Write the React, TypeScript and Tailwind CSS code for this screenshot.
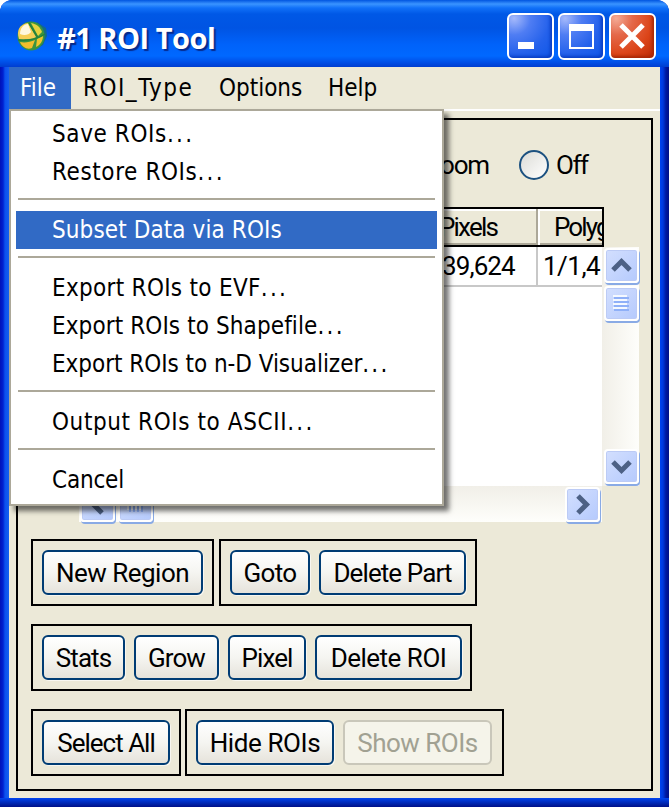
import { clsx } from 'clsx'

const menuFont = "font-['DejaVu_Sans_Condensed','DejaVu_Sans',sans-serif] [font-stretch:condensed]"
const uiFont = "font-['Roboto',sans-serif] [font-stretch:normal]"

const menuItems = [
  { label: 'Save ROIs', tracking: 'tracking-[0.6px]', dots: true },
  { label: 'Restore ROIs', tracking: 'tracking-[0.6px]', dots: true },
  null,
  { label: 'Subset Data via ROIs', tracking: 'tracking-[0.1px]', active: true },
  null,
  { label: 'Export ROIs to EVF', tracking: 'tracking-[0.3px]', dots: true },
  { label: 'Export ROIs to Shapefile', tracking: 'tracking-[0.1px]', dots: true },
  { label: 'Export ROIs to n-D Visualizer', tracking: 'tracking-[-0.04px]', dots: true },
  null,
  { label: 'Output ROIs to ASCII', tracking: 'tracking-[0.6px]', dots: true },
  null,
  { label: 'Cancel', tracking: 'tracking-[-0.2px]' },
]

const buttonRows = [
  {
    gap: 'gap-[5px]',
    groups: [
      { width: 'w-[183px]', buttons: [{ label: 'New Region', width: 'w-[161px]', tracking: 'tracking-[-0.5px]' }] },
      {
        width: 'w-[258px]',
        buttons: [
          { label: 'Goto', width: 'w-[80px]', tracking: 'tracking-[-0.7px]' },
          { label: 'Delete Part', width: 'w-[147px]', tracking: 'tracking-[-0.9px]' },
        ],
      },
    ],
  },
  {
    gap: 'gap-[5px]',
    groups: [
      {
        width: 'w-[441px]',
        buttons: [
          { label: 'Stats', width: 'w-[83px]', tracking: 'tracking-[-0.9px]' },
          { label: 'Grow', width: 'w-[85px]', tracking: 'tracking-[-0.9px]' },
          { label: 'Pixel', width: 'w-[78px]', tracking: 'tracking-[-0.9px]' },
          { label: 'Delete ROI', width: 'w-[147px]', tracking: 'tracking-[-0.5px]' },
        ],
      },
    ],
  },
  {
    gap: 'gap-[4px]',
    groups: [
      { width: 'w-[150px]', buttons: [{ label: 'Select All', width: 'w-[128px]', tracking: 'tracking-[-1px]' }] },
      {
        width: 'w-[319px]',
        buttons: [
          { label: 'Hide ROIs', width: 'w-[138px]', tracking: 'tracking-[-0.4px]' },
          { label: 'Show ROIs', width: 'w-[149px]', tracking: 'tracking-[-0.5px]', disabled: true },
        ],
      },
    ],
  },
]

function AppIcon() {
  return (
    <svg width="34" height="36" viewBox="0 0 34 36" className="shrink-0">
      <path d="M21 3l9 6 1 8-4 9-7 4z" fill="#146a86" />
      <ellipse cx="15" cy="17" rx="13.500" ry="14.500" fill="#3a9440" />
      <path d="M3 20C0 11 4 5 12 4l8 14c-3 2-12 3-17 2z" fill="#f6cf57" />
      <path d="M4 15c0-6 4-10 8-10l3 8c-2 3-7 4-11 2z" fill="#fff8df" />
      <path d="M15 4c6 1 9 4 11 9l-4 4z" fill="#e5d23e" />
      <path d="M4 23c5 1 10 0 15-2l-3 8c-5 2-10-1-12-6z" fill="#f2bd2d" />
      <path d="M21 20l6-3c0 5-3 9-7 11z" fill="#f0c52b" />
      <path d="M13 4l9 15M2 21c9 1 18 0 27-6" stroke="#26813c" strokeWidth="1.500" fill="none" />
    </svg>
  )
}

function CaptionButton({ kind }: { kind: 'min' | 'max' | 'close' }) {
  return (
    <button
      aria-label={kind}
      className={clsx(
        'h-[47px] w-[47px] rounded-[6px] border-2 border-white',
        kind === 'close'
          ? 'bg-[radial-gradient(circle_at_12%_8%,#f4aa95_0%,#e4684a_30%,#dc4519_65%,#bb2a04_100%)] shadow-[inset_-2px_-2px_3px_#a82806]'
          : 'bg-[radial-gradient(circle_at_12%_8%,#a5b9fb_0%,#4f7df3_30%,#2461eb_65%,#0f57e8_100%)] shadow-[inset_-2px_-2px_3px_#0b3fc4]',
      )}
    >
      <svg width="43" height="43" viewBox="0 0 43 43" fill="none">
        {kind === 'min' && <path d="M9 27h16v7H9z" fill="#fff" />}
        {kind === 'max' && <path d="M9 9h25v25H9zM11 16v16h21V16z" fill="#fff" fillRule="evenodd" />}
        {kind === 'close' && <path d="M10 10L32 32M32 10L10 32" stroke="#fff" strokeWidth="5" />}
      </svg>
    </button>
  )
}

function ScrollButton({ kind }: { kind: 'up' | 'down' | 'left' | 'right' | 'thumb-y' | 'thumb-x' }) {
  const paths = {
    up: 'M7 20l8.500-8.500L24 20',
    down: 'M7 11l8.500 8.500L24 11',
    left: 'M20 7l-8.500 8.500L20 24',
    right: 'M11 7l8.500 8.500L11 24',
  }
  return (
    <div className="h-[35px] w-[35px] shrink-0 rounded-[4px] border-2 border-white bg-gradient-to-br from-[#d3dffe] to-[#b5cafd] shadow-[inset_0_0_0_1px_#bccbf5,1px_2px_0_#89aae5]">
      <svg width="31" height="31" viewBox="0 0 31 31" fill="none">
        {kind === 'thumb-y' && (
          <>
            <path d="M7 8h14M7 12h14M7 16h14M7 20h14" stroke="#f4f8ff" strokeWidth="2" />
            <path d="M8 10h15M8 14h15M8 18h15M8 22h15" stroke="#8fb0f8" strokeWidth="2" />
          </>
        )}
        {kind === 'thumb-x' && (
          <>
            <path d="M8 7v14M12 7v14M16 7v14M20 7v14" stroke="#f4f8ff" strokeWidth="2" />
            <path d="M10 8v15M14 8v15M18 8v15M22 8v15" stroke="#8fb0f8" strokeWidth="2" />
          </>
        )}
        {kind in paths && <path d={paths[kind as keyof typeof paths]} stroke="#4d6185" strokeWidth="5" />}
      </svg>
    </div>
  )
}

function FileMenu() {
  return (
    <div className="absolute left-0 top-[42px] z-10 h-[397px] w-[435px] border-2 border-[#aca899] bg-white py-[4px] pl-[5px] pr-[5px] shadow-[5px_5px_5px_rgba(0,0,0,0.55)]">
      {menuItems.map((item, i) =>
        item ? (
          <div
            key={item.label}
            className={clsx(
              'flex h-[38px] items-center whitespace-nowrap pl-[36px] text-[24px]',
              item.tracking,
              item.active && 'bg-[#316ac5] text-white',
            )}
          >
            {item.label}
            {item.dots && <span className="tracking-[2.3px]">...</span>}
          </div>
        ) : (
          <div key={i} className="h-[20px] pl-[2px] pr-[2px] pt-[7px]">
            <div className="h-[2px] bg-[#aca899]" />
          </div>
        ),
      )}
    </div>
  )
}

export default function App() {
  return (
    <div className="h-[807px] w-[669px] overflow-hidden bg-white">
      <div className="flex h-[807px] w-[669px] flex-col overflow-hidden rounded-t-[12px] bg-[linear-gradient(90deg,#0011b8_0px,#0020d0_3px,#0b50ee_5px,#1560f0_9px,#0044f0_660px,#0038dc_663px,#0018a0_666px,#001088_669px)]">
        {/* Title bar */}
        <header className="flex h-[67px] shrink-0 items-center bg-[linear-gradient(180deg,#0055e0_0px,#3a94ff_4px,#1070f8_8px,#0058e6_14px,#0054e3_28px,#0062fa_44px,#0068ff_56px,#0050e8_62px,#003dd0_67px)] pl-[16px] pr-[13px] pt-[6px]">
          <AppIcon />
          <h1 className="ml-[7px] pt-[2px] text-[29px] font-bold tracking-[-0.5px] text-white [text-shadow:2px_2px_1px_#062a8c] font-['Open_Sans',sans-serif]">
            #1 ROI Tool
          </h1>
          <div className="ml-auto flex gap-[4px]">
            <CaptionButton kind="min" />
            <CaptionButton kind="max" />
            <CaptionButton kind="close" />
          </div>
        </header>

        <div className={clsx('relative mx-[9px] h-[731px] w-[651px] bg-[#ece9d8] text-black', menuFont)}>
          <nav className="flex h-[42px] items-center text-[24px]">
            <span className="flex h-[42px] w-[62px] items-center bg-[#316ac5] pl-[11px] text-white">File</span>
            <span className="w-[137px] pl-[12px] tracking-[1.5px]">ROI_Type</span>
            <span className="w-[109px] pl-[11px]">Options</span>
            <span className="pl-[11px]">Help</span>
          </nav>
          <FileMenu />

          <div className={clsx('h-[689px] border-t-2 border-white px-[7px] pt-[7px]', uiFont)}>
            <main className="h-[673px] w-[637px] border-2 border-black pl-[13px]">
              {/* Window selector */}
              <div className="flex h-[87px] items-center pl-[395px] pt-[3px] text-[26px]">
                <span className="w-[93px] shrink-0 tracking-[-1.2px]">Zoom</span>
                <span className="mr-[7px] h-[30px] w-[30px] shrink-0 rounded-full border-2 border-[#1c5180] bg-gradient-to-br from-[#dcdcd7] to-white" />
                <span className="tracking-[-1.5px]">Off</span>
              </div>

              {/* Region table */}
              <section className="h-[316px] w-[608px]">
                <div className="flex h-[40px] w-[573px] overflow-hidden border-2 border-black bg-[#ece9d8] text-[26px] shadow-[inset_0_2px_0_#fff,inset_0_-2px_0_#aca899]">
                  <div className="flex w-[505px] shrink-0 items-center border-r-2 border-[#aca899] pl-[406px] pt-px tracking-[-1.8px]">
                    Pixels
                  </div>
                  <div className="flex shrink-0 items-center border-l-2 border-white pl-[14px] pt-px tracking-[-1.9px]">Polyg</div>
                </div>
                <div className="flex">
                  <div className="h-[239px] w-[571px] overflow-hidden bg-white text-[26px]">
                    <div className="flex h-[40px] border-b-2 border-[#c8c8c8]">
                      <div className="flex w-[507px] shrink-0 items-center border-r-2 border-[#c8c8c8] pl-[411px] tracking-[-0.9px]">
                        39,624
                      </div>
                      <div className="flex shrink-0 items-center pl-[5px] tracking-[-0.5px]">1/1,4</div>
                    </div>
                  </div>
                  <div className="flex h-[239px] w-[37px] flex-col items-end justify-between bg-gradient-to-r from-[#f1efe8] to-[#fefefb] pb-[2px] pt-px">
                    <div className="flex flex-col gap-[3px]">
                      <ScrollButton kind="up" />
                      <ScrollButton kind="thumb-y" />
                    </div>
                    <ScrollButton kind="down" />
                  </div>
                </div>
                <div className="ml-[48px] flex h-[36px] w-[523px] items-center gap-[3px] bg-gradient-to-b from-[#f1efe8] to-[#fefefb] pl-px">
                  <ScrollButton kind="left" />
                  <ScrollButton kind="thumb-x" />
                  <span className="ml-auto mr-[2px] flex">
                    <ScrollButton kind="right" />
                  </span>
                </div>
              </section>

              {/* Action buttons */}
              <div className="flex flex-col gap-[18px] pt-[16px]">
                {buttonRows.map((row, i) => (
                  <div key={i} className={clsx('flex', row.gap)}>
                    {row.groups.map((group) => (
                      <div
                        key={group.buttons[0].label}
                        className={clsx('flex h-[67px] items-center gap-[9px] border-2 border-black pl-[9px]', group.width)}
                      >
                        {group.buttons.map((button) => (
                          <button
                            key={button.label}
                            disabled={button.disabled}
                            className={clsx(
                              'h-[45px] shrink-0 whitespace-nowrap rounded-[6px] border-2 pt-px text-[26px]',
                              button.width,
                              button.tracking,
                              button.disabled
                                ? 'border-[#c9c7ba] bg-[#f5f4ea] text-[#a1a192]'
                                : 'border-[#003c74] bg-gradient-to-b from-white via-[#f5f5f1] to-[#e6e3db] shadow-[1px_1px_0_#f8f7f1]',
                            )}
                          >
                            {button.label}
                          </button>
                        ))}
                      </div>
                    ))}
                  </div>
                ))}
              </div>
            </main>
          </div>
        </div>
        <div className="h-[9px] bg-gradient-to-b from-[#0044f0] to-[#001088]" />
      </div>
    </div>
  )
}
